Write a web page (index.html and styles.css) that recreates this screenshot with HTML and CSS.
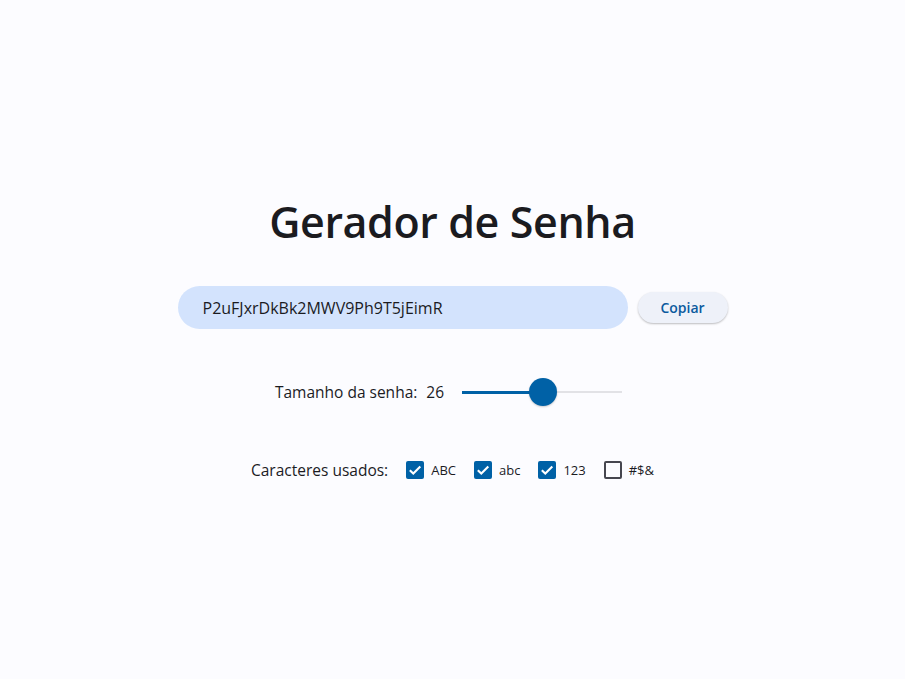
FILE: index.html
```html
<!DOCTYPE html>
<html lang="pt">
<head>
<meta charset="utf-8">
<title>Gerador de Senha</title>
<link rel="stylesheet" href="styles.css">
</head>
<body>
<main class="app">
  <h1 class="title">Gerador de Senha</h1>
  <div class="pw-row">
    <div class="pw-field">P2uFJxrDkBk2MWV9Ph9T5jEimR</div>
    <button class="copy-btn">Copiar</button>
  </div>
  <div class="len-row">
    <span class="len-label">Tamanho da senha:</span>
    <span class="len-value">26</span>
    <div class="slider">
      <div class="track"></div>
      <div class="track-active" style="width: 81px"></div>
      <div class="thumb" style="left: 81px"></div>
    </div>
  </div>
  <div class="chars-row">
    <span class="chars-label">Caracteres usados:</span>
    <label class="opt"><span class="box checked"><svg viewBox="0 0 18 18" width="18" height="18"><path d="M3.8 9.2 L7.3 12.6 L14.3 5.6" fill="none" stroke="#fff" stroke-width="2.1"/></svg></span>ABC</label>
    <label class="opt"><span class="box checked"><svg viewBox="0 0 18 18" width="18" height="18"><path d="M3.8 9.2 L7.3 12.6 L14.3 5.6" fill="none" stroke="#fff" stroke-width="2.1"/></svg></span>abc</label>
    <label class="opt"><span class="box checked"><svg viewBox="0 0 18 18" width="18" height="18"><path d="M3.8 9.2 L7.3 12.6 L14.3 5.6" fill="none" stroke="#fff" stroke-width="2.1"/></svg></span>123</label>
    <label class="opt"><span class="box"></span>#$&amp;</label>
  </div>
</main>
</body>
</html>
```
FILE: styles.css
```css
* { box-sizing: border-box; }
html, body { margin: 0; padding: 0; }
body {
  background: #fcfcff;
  color: #1b1b1f;
  font-family: "Open Sans", "Noto Sans", sans-serif;
  height: 679px;
  overflow: hidden;
}
.app {
  display: flex;
  flex-direction: column;
  align-items: center;
  padding-top: 192px;
}
.title {
  margin: 0;
  font-size: 43px;
  font-weight: 600;
  line-height: 60px;
  height: 60px;
  letter-spacing: -0.4px;
}
.pw-row {
  margin-top: 34px;
  display: flex;
  align-items: center;
  gap: 10px;
  height: 43px;
}
.pw-field {
  width: 450px;
  height: 43px;
  border-radius: 22px;
  background: #d3e3fd;
  padding-left: 25px;
  display: flex;
  align-items: center;
  font-size: 16px;
  color: #1b1b1f;
}
.copy-btn {
  width: 90px;
  height: 31px;
  border: none;
  border-radius: 16px;
  background: #eef1f9;
  color: #0b5a9e;
  font-family: inherit;
  font-size: 14px;
  font-weight: 600;
  box-shadow: 0 1px 2px rgba(0,0,0,0.25);
  padding: 0;
}
.len-row {
  margin-top: 43px;
  height: 40px;
  display: flex;
  align-items: center;
  font-size: 15.5px;
  margin-left: -8px;
}
.len-value { margin-left: 9px; }
.slider {
  position: relative;
  width: 160px;
  height: 28px;
  margin-left: 18px;
}
.track {
  position: absolute;
  left: 0; right: 0; top: 13px;
  height: 2px;
  background: #e2e2e6;
}
.track-active {
  position: absolute;
  left: 0; top: 12.5px;
  height: 3px;
  background: #0061a6;
}
.thumb {
  position: absolute;
  top: 0;
  width: 28px;
  height: 28px;
  margin-left: -14px;
  border-radius: 50%;
  background: #0061a6;
  box-shadow: 0 1px 2px rgba(0,0,0,0.2);
}
.chars-row {
  margin-top: 46px;
  height: 24px;
  display: flex;
  align-items: center;
  font-size: 15.5px;
}
.chars-label { margin-right: 18px; }
.opt {
  display: flex;
  align-items: center;
  font-size: 13px;
  margin-right: 18px;
}
.opt:last-child { margin-right: 0; }
.box {
  width: 18px;
  height: 18px;
  border-radius: 2px;
  border: 2px solid #46464f;
  margin-right: 7px;
  display: inline-flex;
}
.box.checked {
  background: #0061a6;
  border: none;
}
```
